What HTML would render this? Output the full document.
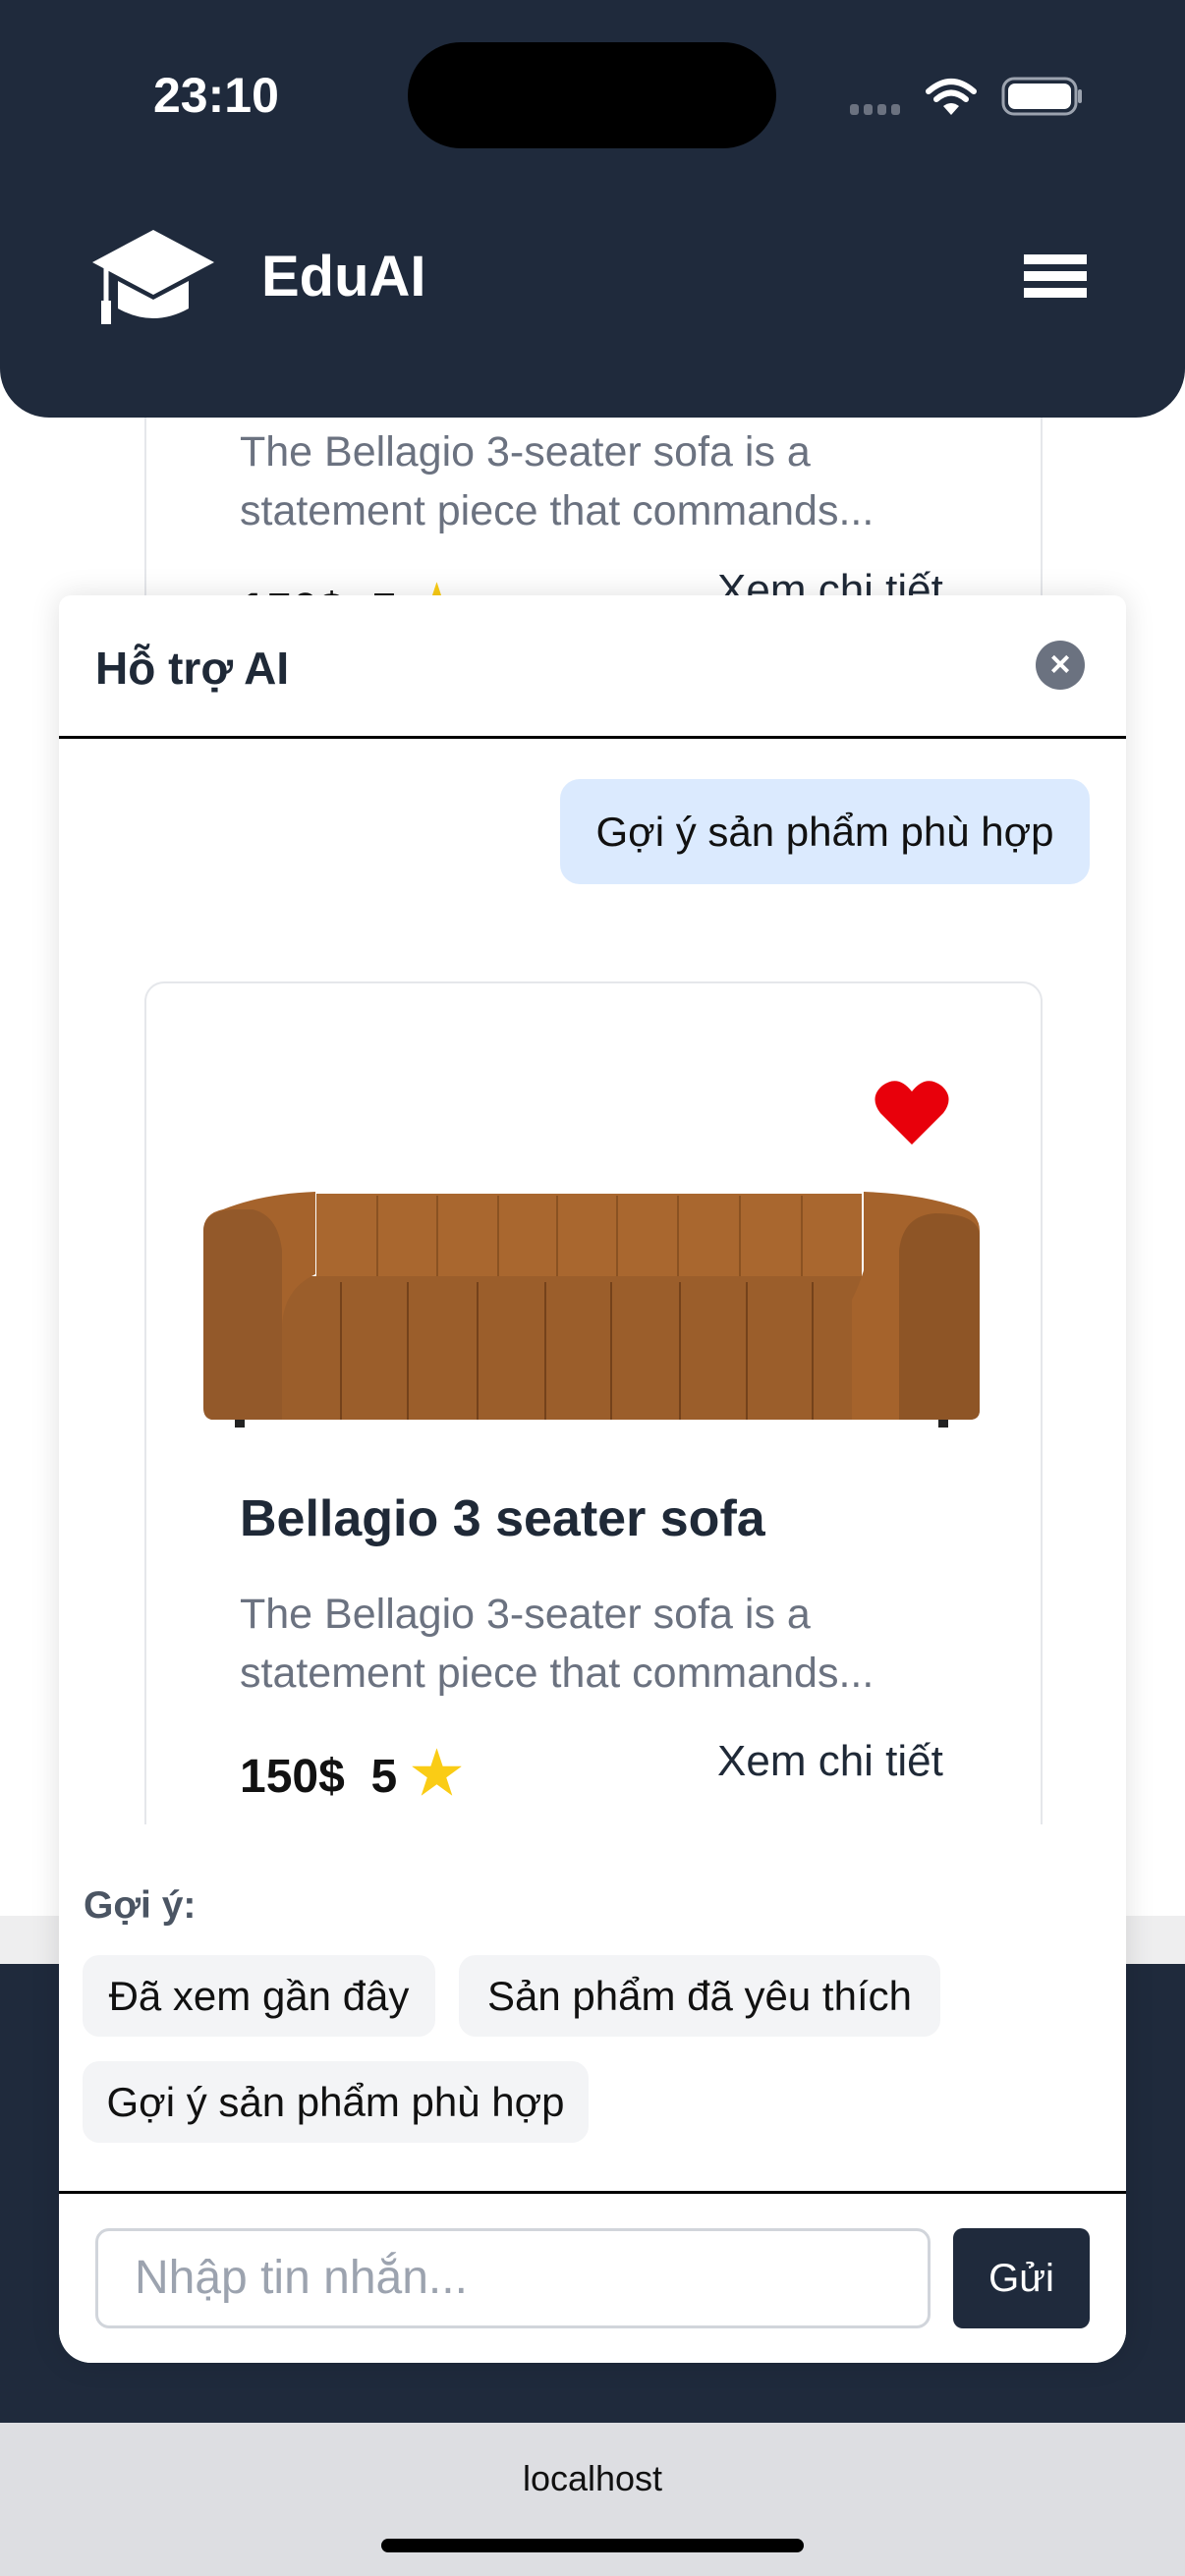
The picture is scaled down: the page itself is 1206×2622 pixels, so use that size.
<!DOCTYPE html>
<html><head><meta charset="utf-8">
<style>
*{margin:0;padding:0;box-sizing:border-box}
body{width:1206px;height:2622px;position:relative;overflow:hidden;background:#fff;font-family:"Liberation Sans","Noto Sans CJK SC",sans-serif}
.a{position:absolute}
.t{white-space:nowrap}
</style></head><body>
<!-- background page -->
<div class="a" style="left:147px;top:400px;width:914px;height:300px;border:2px solid #e5e7eb;border-top:none"></div>
<div class="a t" style="left:244px;top:430px;font-size:43px;color:#6b7280;line-height:60px">The Bellagio 3-seater sofa is a<br>statement piece that commands...</div>
<div class="a t" style="left:244px;top:574px;font-size:48px;font-weight:bold;color:#111">150$&nbsp; 5 <span style="color:#facc15;font-size:54px">★</span></div>
<div class="a t" style="left:730px;top:576px;font-size:44px;color:#1f2937">Xem chi tiết</div>
<div class="a" style="left:0;top:1950px;width:1206px;height:50px;background:#eeeeef"></div>
<div class="a" style="left:0;top:1999px;width:1206px;height:467px;background:#1f2a3c"></div>
<div class="a" style="left:0;top:2466px;width:1206px;height:156px;background:#dddee2"></div>
<div class="a t" style="left:0;width:1206px;text-align:center;top:2502px;font-size:36px;color:#111">localhost</div>
<div class="a" style="left:388px;top:2584px;width:430px;height:14px;border-radius:7px;background:#000"></div>

<!-- header -->
<div class="a" style="left:0;top:0;width:1206px;height:425px;background:#1f2a3c;border-radius:0 0 50px 50px"></div>
<div class="a t" style="left:156px;top:68px;font-size:50px;font-weight:bold;color:#fff">23:10</div>
<div class="a" style="left:415px;top:43px;width:375px;height:108px;border-radius:54px;background:#000"></div>
<svg class="a" style="left:860px;top:76px" width="250" height="45" viewBox="0 0 250 45">
<g fill="#6b7280"><rect x="5" y="30" width="9" height="11" rx="3"/><rect x="19" y="30" width="9" height="11" rx="3"/><rect x="33" y="30" width="9" height="11" rx="3"/><rect x="47" y="30" width="9" height="11" rx="3"/></g>
<g fill="none" stroke="#fff" stroke-width="6" stroke-linecap="round"><path d="M85 17 Q108 -3 131 17"/><path d="M93 25 Q108 12 123 25"/></g>
<path d="M100 32 L108 41 L116 32 Q108 26 100 32Z" fill="#fff"/>
<rect x="161" y="4" width="74" height="36" rx="11" fill="none" stroke="#9ca3af" stroke-width="3"/>
<rect x="166" y="9" width="64" height="26" rx="7" fill="#fff"/>
<rect x="237" y="15" width="4" height="14" rx="2" fill="#9ca3af"/>
</svg>
<svg class="a" style="left:94px;top:234px" width="124" height="98" viewBox="0 0 124 98">
<path d="M62 0 L124 33 L62 66 L0 33Z" fill="#fff"/>
<path d="M26 52 L26 80 Q62 100 98 80 L98 52 L62 71Z" fill="#fff"/>
<path d="M14 38 L14 75" stroke="#fff" stroke-width="5"/>
<rect x="9" y="72" width="10" height="24" fill="#fff"/>
</svg>
<div class="a t" style="left:266px;top:248px;font-size:58px;font-weight:bold;color:#fff">EduAI</div>
<div class="a" style="left:1042px;top:259px;width:64px;height:10px;background:#fff"></div>
<div class="a" style="left:1042px;top:276px;width:64px;height:10px;background:#fff"></div>
<div class="a" style="left:1042px;top:293px;width:64px;height:10px;background:#fff"></div>

<!-- chat panel -->
<div class="a" style="left:60px;top:606px;width:1086px;height:1799px;background:#fff;border-radius:12px 12px 33px 33px;box-shadow:0 0 30px rgba(0,0,0,.12);overflow:hidden">
  <div class="a t" style="left:37px;top:47px;font-size:46px;font-weight:bold;color:#1f2937">Hỗ trợ AI</div>
  <div class="a" style="left:994px;top:46px;width:50px;height:50px;border-radius:25px;background:#6b7280;color:#fff;font-size:36px;line-height:48px;text-align:center;font-weight:bold">×</div>
  <div class="a" style="left:0;top:143px;width:1086px;height:3px;background:#000"></div>
  <div class="a t" style="left:510px;top:187px;width:539px;height:107px;background:#dbeafe;border-radius:20px;font-size:42px;color:#111;line-height:107px;text-align:center">Gợi ý sản phẩm phù hợp</div>
  <div class="a" style="left:87px;top:393px;width:914px;height:880px;border:2px solid #e5e7eb;border-radius:20px"></div>
  <svg class="a" style="left:830px;top:493px" width="76" height="66" viewBox="0 0 76 66"><path d="M38 66 L6 34 Q-6 18 8 6 Q24 -6 38 12 Q52 -6 68 6 Q82 18 70 34Z" fill="#e8000b"/></svg>
  <svg class="a" style="left:147px;top:607px" width="792" height="242" viewBox="0 0 792 242">
   <rect x="32" y="226" width="10" height="14" fill="#222"/><rect x="748" y="226" width="10" height="14" fill="#222"/>
   <path d="M115 2 L670 2 L670 190 L115 190Z" fill="#a9672f"/>
   <g stroke="#8a5222" stroke-width="2"><path d="M177 4V100M238 4V100M300 4V100M360 4V100M421 4V100M483 4V100M546 4V100M609 4V100"/></g>
   <path d="M70 100 Q80 86 110 86 L680 86 Q700 90 700 110 L700 232 L80 232 Q70 230 70 220Z" fill="#9b5e2b"/>
   <g stroke="#74421b" stroke-width="2"><path d="M140 92V232M208 92V232M279 92V232M348 92V232M415 92V232M485 92V232M553 92V232M620 92V232"/></g>
   <path d="M0 40 Q0 22 20 18 Q60 2 114 0 L114 84 Q80 100 80 140 L80 230 L8 230 Q0 228 0 218Z" fill="#a5632c"/>
   <path d="M50 18 Q76 24 80 60 L80 232 L8 232 Q0 230 0 220 L0 40 Q0 20 30 18Z" fill="#93592a"/>
   <path d="M672 0 Q730 2 770 16 Q790 22 790 40 L790 222 Q790 232 780 232 L660 232 L660 110 Q668 94 672 80Z" fill="#a5632c"/>
   <path d="M745 22 Q790 22 790 46 L790 222 Q790 232 780 232 L708 232 L708 60 Q712 24 745 22Z" fill="#8e5526"/>
  </svg>
  <div class="a t" style="left:184px;top:910px;font-size:52px;font-weight:bold;color:#1f2937">Bellagio 3 seater sofa</div>
  <div class="a t" style="left:184px;top:1007px;font-size:43px;color:#6b7280;line-height:60px">The Bellagio 3-seater sofa is a<br>statement piece that commands...</div>
  <div class="a t" style="left:184px;top:1155px;font-size:48px;font-weight:bold;color:#111">150$&nbsp; 5 <span style="color:#facc15;font-size:54px">★</span></div>
  <div class="a t" style="left:670px;top:1162px;font-size:44px;color:#1f2937">Xem chi tiết</div>
  <div class="a" style="left:0;top:1251px;width:1086px;height:548px;background:#fff"></div>
  <div class="a t" style="left:25px;top:1312px;font-size:39px;font-weight:bold;color:#4b5563">Gợi ý:</div>
  <div class="a t" style="left:24px;top:1384px;width:359px;height:83px;background:#f3f4f6;border-radius:17px;font-size:42px;color:#111;line-height:83px;text-align:center">Đã xem gần đây</div>
  <div class="a t" style="left:407px;top:1384px;width:490px;height:83px;background:#f3f4f6;border-radius:17px;font-size:42px;color:#111;line-height:83px;text-align:center">Sản phẩm đã yêu thích</div>
  <div class="a t" style="left:24px;top:1492px;width:515px;height:83px;background:#f3f4f6;border-radius:17px;font-size:42px;color:#111;line-height:83px;text-align:center">Gợi ý sản phẩm phù hợp</div>
  <div class="a" style="left:0;top:1624px;width:1086px;height:3px;background:#000"></div>
  <div class="a t" style="left:37px;top:1662px;width:850px;height:102px;border:3px solid #d1d5db;border-radius:14px;font-size:48px;color:#9ca3af;line-height:96px;padding-left:37px">Nhập tin nhắn...</div>
  <div class="a t" style="left:910px;top:1662px;width:139px;height:102px;background:#1f2a3c;border-radius:10px;font-size:40px;color:#fff;line-height:102px;text-align:center">Gửi</div>
</div>
</body></html>
